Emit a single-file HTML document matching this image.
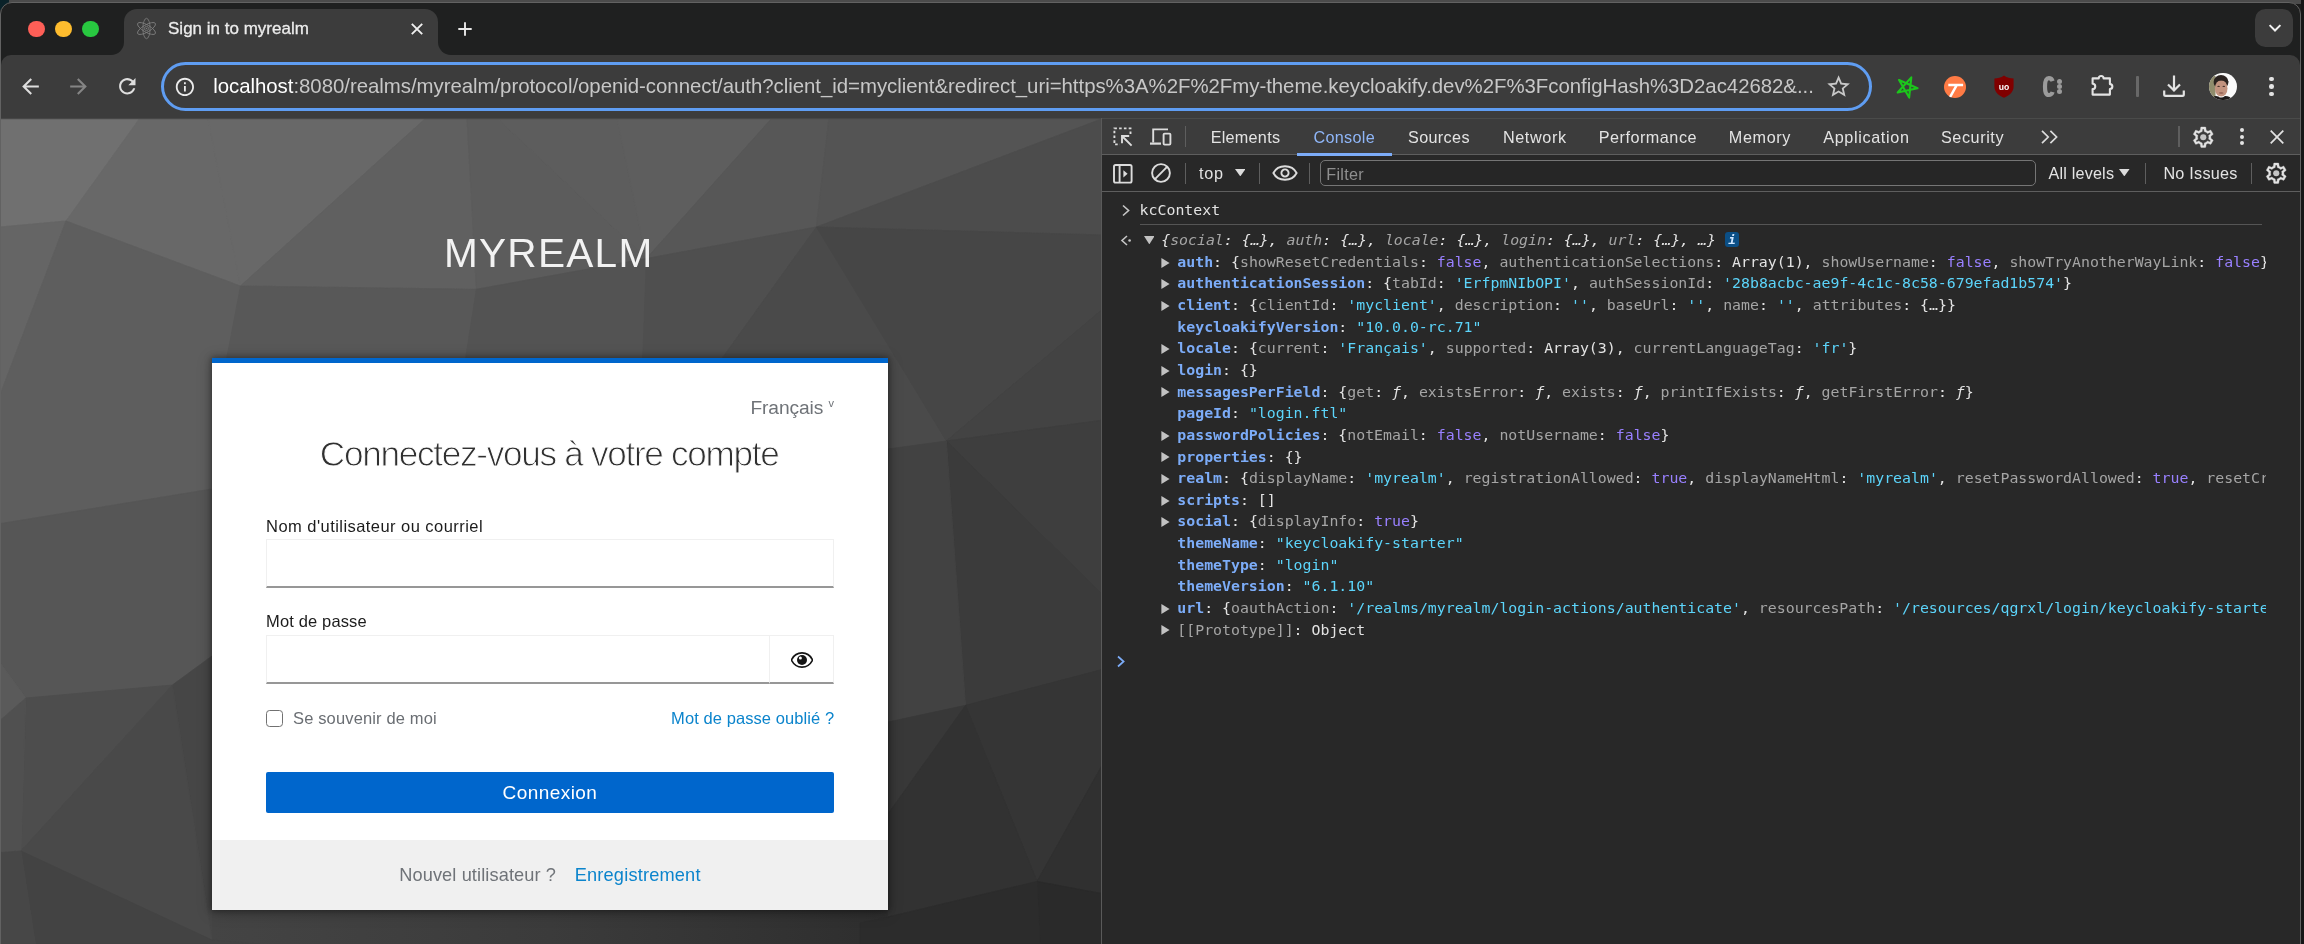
<!DOCTYPE html><html lang="fr"><head><meta charset="utf-8"><title>Sign in to myrealm</title><style>
*{box-sizing:border-box;margin:0;padding:0}
html,body{width:2304px;height:944px;overflow:hidden;background:#1b1b1b}
body{position:relative;font-family:"Liberation Sans",sans-serif}
.abs{position:absolute}
.grp{position:absolute;left:0;top:0;width:0;height:0}
input,button{font:inherit;outline:none;-webkit-appearance:none;appearance:none;border-radius:0;margin:0;padding:0}
.t{position:absolute;white-space:pre}
#desk{position:absolute;left:0;top:0;width:2304px;height:4px;background:#4b4b4b}
#deskL{position:absolute;left:0;top:0;width:9px;height:10px;background:#0a2229}
#win{position:absolute;left:0;top:2px;width:2301.4px;height:960px;background:#1f2020;border-radius:12px 12px 0 0;border:1.3px solid #626262;overflow:hidden}
#app{position:absolute;left:0;top:0;width:2304px;height:944px;will-change:transform}
#toolbar{position:absolute;left:1.3px;top:55.2px;width:2298.8px;height:63px;background:#3c3c3c;border-radius:10px 10px 0 0}
#tab{position:absolute;left:124.3px;top:9px;width:314px;height:46.5px;background:#3c3c3c;border-radius:13px 13px 0 0}
.flare{position:absolute;top:42.2px;width:13px;height:13px;background:#3c3c3c}
.flare i{position:absolute;left:0;top:0;width:13px;height:13px;background:#1f2020}
#omni{position:absolute;left:161px;top:62px;width:1711.4px;height:49px;border:3px solid #5f9df2;border-radius:24.5px;background:#3c3c3c}
#tsearch{position:absolute;left:2255px;top:9px;width:38px;height:38px;border-radius:10.5px;background:#3c3c3c}
#page{position:absolute;left:1.3px;top:118.3px;width:1099.3px;height:830px;overflow:hidden;background:#555}
#card{position:absolute;left:211.6px;top:358.2px;width:676.8px;height:551.4px;background:#fff;border-top:5.4px solid #0066cc;box-shadow:0 0 6px 1px rgba(0,0,0,.35), 0 2px 14px rgba(0,0,0,.25)}
#cardfoot{position:absolute;left:211.6px;top:839.7px;width:676.8px;height:69.9px;background:#f0f0f0}
.inp{position:absolute;background:#fff;border:1.3px solid #f0f0f0;border-bottom:2px solid #979797}
#dt{position:absolute;left:1100.6px;top:118.3px;width:1199.5px;height:830px;background:#282828;border-left:1.3px solid #5a5a5a}
#dttabs{position:absolute;left:1101.9px;top:118.3px;width:1198.2px;height:37px;background:#3c3c3c;border-bottom:1.3px solid #5e5e5e;border-top:1px solid #4a4b4a}
#dtbar{position:absolute;left:1101.9px;top:155.3px;width:1198.2px;height:36.6px;background:#282828;border-bottom:1.3px solid #5e5e5e}
.vsep{position:absolute;width:1.3px;background:#5e5e5e}
#filter{position:absolute;left:1319.8px;top:160.3px;width:715.8px;height:25.4px;border:1.3px solid #757575;border-radius:5px;background:#262626}
#rowsclip{position:absolute;left:0;top:0;width:2266.2px;height:944px;overflow:hidden}
.row{position:absolute;left:1177.3px;white-space:pre;font:400 14.87px/21.63px "DejaVu Sans Mono","Liberation Mono",monospace;color:#e3e3e3}
.k{color:#7cacf8;font-weight:700}
.d{color:#a5a5a5}
.s{color:#5cd5fb}
.b{color:#9980ff}
.f{font-style:italic}
.di{color:#a5a5a5;font-style:italic}
</style></head><body>
<div id="desk"></div><div id="deskL"></div>
<div id="win"></div>
<div id="app">
<header class="grp" id="tabstrip">
<div class="abs" style="left:28.2px;top:20.7px;width:16.6px;height:16.6px;border-radius:50%;background:#fe5f57"></div>
<div class="abs" style="left:55.2px;top:20.7px;width:16.6px;height:16.6px;border-radius:50%;background:#febc2e"></div>
<div class="abs" style="left:82.2px;top:20.7px;width:16.6px;height:16.6px;border-radius:50%;background:#28c840"></div>
<div id="tab"></div>
<div class="flare" style="left:111.3px"><i style="border-radius:0 0 13px 0"></i></div>
<div class="flare" style="left:438.3px"><i style="border-radius:0 0 0 13px"></i></div>
<svg class="abs" style="left:135.50px;top:16.60px;" width="21" height="23" viewBox="-10.5 -11.5 21 23"><g fill="none" stroke="#7d7d7d" stroke-width="0.85"><ellipse rx="3.6" ry="10.2"/><ellipse rx="3.6" ry="10.2" transform="rotate(60)"/><ellipse rx="3.6" ry="10.2" transform="rotate(-60)"/><circle r="2.1" stroke-width="0.8"/></g><circle r="0.8" fill="#7d7d7d"/></svg>
<span class="t" id="tabtitle" style="left:168.00px;top:17.51px;font:400 17.0px/22px 'Liberation Sans', sans-serif;color:#ececec;letter-spacing:0.007px;-webkit-text-stroke:0.3px #ececec;">Sign in to myrealm</span>
<svg class="abs" style="left:409.80px;top:21.60px;" width="14" height="14" viewBox="-7 -7 14 14"><path d="M-5.2 -5.2L5.2 5.2M5.2 -5.2L-5.2 5.2" stroke="#f0f0f0" stroke-width="1.9" fill="none"/></svg>
<svg class="abs" style="left:457.10px;top:20.60px;" width="16" height="16" viewBox="-8 -8 16 16"><path d="M-6.7 0H6.7M0 -6.7V6.7" stroke="#e8e8e8" stroke-width="1.9" fill="none"/></svg>
<div id="tsearch"></div>
<svg class="abs" style="left:2266.60px;top:20.00px;" width="16" height="16" viewBox="-8 -8 16 16"><path d="M-5.4 -2.9L0 2.5L5.4 -2.9" stroke="#f2f2f2" stroke-width="2" fill="none"/></svg>
</header>
<nav class="grp" id="navbar">
<div id="toolbar"></div>
<svg class="abs" style="left:17.50px;top:74.00px;" width="25" height="25" viewBox="0 0 24 24"><path d="M20 11H7.83l5.59-5.59L12 4l-8 8 8 8 1.41-1.41L7.83 13H20v-2z" fill="#dedede"/></svg>
<svg class="abs" style="left:65.70px;top:74.00px;" width="25" height="25" viewBox="0 0 24 24"><path d="M12 4l-1.41 1.41L16.17 11H4v2h12.17l-5.58 5.59L12 20l8-8z" fill="#858585"/></svg>
<svg class="abs" style="left:115.10px;top:74.40px;" width="24.6" height="24.6" viewBox="0 0 24 24"><path d="M17.65 6.35C16.2 4.9 14.21 4 12 4c-4.42 0-7.99 3.58-7.99 8s3.57 8 7.99 8c3.73 0 6.84-2.55 7.73-6h-2.08c-.82 2.33-3.04 4-5.65 4-3.31 0-6-2.69-6-6s2.69-6 6-6c1.66 0 3.14.69 4.22 1.78L13 11h7V4l-2.35 2.35z" fill="#dedede"/></svg>
<div id="omni"></div>
<svg class="abs" style="left:174.40px;top:75.60px;" width="21.8" height="21.8" viewBox="0 0 24 24"><path d="M11 7h2v2h-2zm0 4h2v6h-2zm1-9C6.48 2 2 6.48 2 12s4.48 10 10 10 10-4.48 10-10S17.52 2 12 2zm0 18c-4.41 0-8-3.59-8-8s3.59-8 8-8 8 3.59 8 8-3.59 8-8 8z" fill="#ececec"/></svg>
<span class="t" id="url" style="left:213.20px;top:73.33px;font:400 20.4px/27px 'Liberation Sans', sans-serif;color:#c7c7c7;letter-spacing:-0.031px;"><span style="color:#fff">localhost</span>:8080/realms/myrealm/protocol/openid-connect/auth?client_id=myclient&amp;redirect_uri=https%3A%2F%2Fmy-theme.keycloakify.dev%2F%3FconfigHash%3D2ac42682&amp;...</span>
<svg class="abs" style="left:1825.00px;top:73.00px;" width="27.2" height="27.2" viewBox="0 0 24 24"><path d="M22 9.24l-7.19-.62L12 2 9.19 8.63 2 9.24l5.46 4.73L5.82 21 12 17.27 18.18 21l-1.63-7.03L22 9.24zM12 15.4l-3.76 2.27 1-4.28-3.32-2.88 4.38-.38L12 6.1l1.71 4.04 4.38.38-3.32 2.88 1 4.28L12 15.4z" fill="#c8c8c8"/></svg>
<svg class="abs" style="left:1894.70px;top:74.80px;" width="24" height="24" viewBox="-12 -12 24 24"><g transform="rotate(24) scale(1.1)"><path d="M0 -9.6L5.7 8L-9.2 -2.9H9.2L-5.7 8Z" fill="none" stroke="#1cc61c" stroke-width="1.9" stroke-linejoin="round"/></g></svg>
<div class="abs" style="left:1943.9px;top:75.5px;width:22.2px;height:22.2px;border-radius:50%;background:#ff7b45;overflow:hidden"><svg class="abs" style="left:0;top:0" width="22.2" height="22.2" viewBox="-11.1 -11.1 22.2 22.2"><path d="M-6.8 -2.2H8M1.6 -2L-5.6 11" stroke="#fff" stroke-width="2.5" fill="none"/></svg></div>
<svg class="abs" style="left:1993.70px;top:74.90px;" width="20" height="23" viewBox="-10 -11.5 20 23"><path d="M0 -11C-3 -8.8 -6.5 -8 -9.6 -8V0C-9.6 6 -4.5 9.5 0 11.3C4.5 9.5 9.6 6 9.6 0V-8C6.5 -8 3 -8.8 0 -11Z" fill="#800000"/><text x="0" y="3" text-anchor="middle" font-family="Liberation Sans, sans-serif" font-weight="700" font-size="8.6" fill="#fff">uo</text></svg>
<svg class="abs" style="left:2040.00px;top:74.00px;" width="26" height="26" viewBox="0 0 26 26"><path d="M12.6 7.2C11.8 4.6 9.9 4.2 8.8 4.2C5.6 4.2 5 7.4 5 12.6C5 17.8 5.6 21 8.8 21C9.9 21 11.8 20.6 12.6 18" fill="none" stroke="#9b9b9b" stroke-width="4.2"/><circle cx="19.5" cy="7.6" r="2.5" fill="#9b9b9b"/><circle cx="19.5" cy="12.5" r="2.5" fill="#9b9b9b"/><circle cx="19.5" cy="17.5" r="2.5" fill="#9b9b9b"/></svg>
<svg class="abs" style="left:2089.50px;top:73.00px;" width="26" height="26" viewBox="-13 -13 26 26"><path d="M-10.4 -7.6H-4.3A2.45 2.45 0 0 1 0.6 -7.6H6.9V-1.9A2.45 2.45 0 0 1 6.9 3V8.6H-10.4V3.1A2.65 2.65 0 0 0 -10.4 -2.2Z" fill="none" stroke="#e3e3e3" stroke-width="2.1" stroke-linejoin="round"/></svg>
<div class="abs" style="left:2136.2px;top:75.6px;width:2.4px;height:21.6px;background:#686868;border-radius:1px"></div>
<svg class="abs" style="left:2161.00px;top:73.00px;" width="26" height="26" viewBox="-13 -13 26 26"><path d="M0 -10.4V4.5M-6 -1.6L0 4.5L6 -1.6" fill="none" stroke="#e3e3e3" stroke-width="2.2"/><path d="M-9.8 4.6V8.4Q-9.8 9.8 -8.4 9.8H8.4Q9.8 9.8 9.8 8.4V4.6" fill="none" stroke="#e3e3e3" stroke-width="2.2"/></svg>
<div class="abs" style="left:2209.3px;top:72.5px;width:27.4px;height:27.4px;border-radius:50%;background:#fafafa;overflow:hidden"><svg class="abs" style="left:0;top:0" width="27.4" height="27.4" viewBox="0 0 27.4 27.4"><rect x="0" y="3" width="6.5" height="22" fill="#8f8c6c"/><ellipse cx="12" cy="9" rx="7.4" ry="7" fill="#2b2320"/><ellipse cx="12.2" cy="15.4" rx="6.3" ry="8.2" fill="#c2937f"/><path d="M4.8 11Q6 5.5 12 5.2Q18 5.4 19.4 11L18.4 7.2L12 3.6L5.6 6.4Z" fill="#2b2320"/><path d="M5.6 12Q7 6.6 12.4 7.6Q17.4 6.8 18.8 12L19.4 8L12 4L5 7.4Z" fill="#2b2320"/><path d="M2 27.4Q4 21.5 9.4 23.4Q12.4 26 16 23Q22 23 23 27.4Z" fill="#1d1a1a"/><ellipse cx="12.2" cy="20" rx="2.4" ry="0.8" fill="#8d5c50"/><ellipse cx="9.6" cy="13.4" rx="1.3" ry="0.6" fill="#4a352e"/><ellipse cx="14.8" cy="13.4" rx="1.3" ry="0.6" fill="#4a352e"/></svg></div>
<div class="abs" style="left:2269.2px;top:76.7px;width:4.6px;height:4.6px;border-radius:50%;background:#e3e3e3"></div>
<div class="abs" style="left:2269.2px;top:84.2px;width:4.6px;height:4.6px;border-radius:50%;background:#e3e3e3"></div>
<div class="abs" style="left:2269.2px;top:91.7px;width:4.6px;height:4.6px;border-radius:50%;background:#e3e3e3"></div>
</nav>
<main class="grp" id="kc">
<div id="page"><svg class="abs" style="left:-1.3px;top:-118.3px" width="1104" height="948" viewBox="0 0 1104 948"><defs><linearGradient id="bgg" x1="0" y1="118" x2="1100" y2="944" gradientUnits="userSpaceOnUse"><stop offset="0" stop-color="#727272"/><stop offset="0.45" stop-color="#585858"/><stop offset="1" stop-color="#303030"/></linearGradient><linearGradient id="bot" x1="212" y1="0" x2="888" y2="0" gradientUnits="userSpaceOnUse"><stop offset="0" stop-color="#444"/><stop offset="0.5" stop-color="#3b3b3b"/><stop offset="1" stop-color="#2e2e2e"/></linearGradient></defs><rect x="0" y="118" width="1104" height="830" fill="url(#bgg)"/><rect x="200" y="900" width="700" height="48" fill="url(#bot)"/><polygon points="0,118 140,118 66,221 0,227" fill="#707070" stroke="#707070" stroke-width="0.8"/><polygon points="140,118 208,118 240.5,286 66,221" fill="#686868" stroke="#686868" stroke-width="0.8"/><polygon points="208,118 426,118 240.5,286" fill="#686868" stroke="#686868" stroke-width="0.8"/><polygon points="426,118 467,118 476.4,289.3 240.5,286" fill="#606060" stroke="#606060" stroke-width="0.8"/><polygon points="467,118 497,118 646.4,258.5 476.4,289.3" fill="#5c5c5c" stroke="#5c5c5c" stroke-width="0.8"/><polygon points="497,118 617,118 646.4,258.5" fill="#5d5d5d" stroke="#5d5d5d" stroke-width="0.8"/><polygon points="617,118 772,118 646.4,258.5" fill="#5e5e5e" stroke="#5e5e5e" stroke-width="0.8"/><polygon points="772,118 829,118 816.4,227 646.4,258.5" fill="#575757" stroke="#575757" stroke-width="0.8"/><polygon points="829,118 1104,118 816.4,227" fill="#545454" stroke="#545454" stroke-width="0.8"/><polygon points="1104,118 1104,235 816.4,227" fill="#4c4c4c" stroke="#4c4c4c" stroke-width="0.8"/><polygon points="0,227 66,221 0,395" fill="#656565" stroke="#656565" stroke-width="0.8"/><polygon points="66,221 240.5,286 226,362 212,489 0,523.7 0,395" fill="#5e5e5e" stroke="#5e5e5e" stroke-width="0.8"/><polygon points="240.5,286 476.4,289.3 465,362 226,362" fill="#585858" stroke="#585858" stroke-width="0.8"/><polygon points="476.4,289.3 646.4,258.5 642.6,362 465,362" fill="#535353" stroke="#535353" stroke-width="0.8"/><polygon points="646.4,258.5 816.4,227 719.5,362 642.6,362" fill="#4f4f4f" stroke="#4f4f4f" stroke-width="0.8"/><polygon points="816.4,227 946.4,441 888,449 888,362 719.5,362" fill="#4a4a4a" stroke="#4a4a4a" stroke-width="0.8"/><polygon points="816.4,227 1104,235 1104,308 946.4,441" fill="#464646" stroke="#464646" stroke-width="0.8"/><polygon points="946.4,441 1104,308 1104,420" fill="#434343" stroke="#434343" stroke-width="0.8"/><polygon points="946.4,441 1104,420 1104,596" fill="#3e3e3e" stroke="#3e3e3e" stroke-width="0.8"/><polygon points="946.4,441 1104,596 1104,669 965.6,705.3" fill="#3b3b3b" stroke="#3b3b3b" stroke-width="0.8"/><polygon points="888,449 946.4,441 965.6,705.3 888,722" fill="#424242" stroke="#424242" stroke-width="0.8"/><polygon points="888,722 965.6,705.3 888,814" fill="#383838" stroke="#383838" stroke-width="0.8"/><polygon points="965.6,705.3 1104,669 1104,762 1037,881.4" fill="#353535" stroke="#353535" stroke-width="0.8"/><polygon points="888,814 965.6,705.3 1037,881.4 888,917" fill="#323232" stroke="#323232" stroke-width="0.8"/><polygon points="1037,881.4 1104,762 1104,894" fill="#303030" stroke="#303030" stroke-width="0.8"/><polygon points="1037,881.4 1104,894 1104,944 1040,944" fill="#2a2a2a" stroke="#2a2a2a" stroke-width="0.8"/><polygon points="888,917 1037,881.4 1040,944 860,944 860,923" fill="#2c2c2c" stroke="#2c2c2c" stroke-width="0.8"/><polygon points="0,523.7 212,489 212,656 172.4,685 25.8,698 0,662.5" fill="#565656" stroke="#565656" stroke-width="0.8"/><polygon points="0,662.5 25.8,698 0,720.5" fill="#5a5a5a" stroke="#5a5a5a" stroke-width="0.8"/><polygon points="25.8,698 172.4,685 21,851" fill="#4d4d4d" stroke="#4d4d4d" stroke-width="0.8"/><polygon points="0,720.5 25.8,698 21,851 0,852.6" fill="#505050" stroke="#505050" stroke-width="0.8"/><polygon points="172.4,685 212,656 212,940" fill="#464646" stroke="#464646" stroke-width="0.8"/><polygon points="172.4,685 212,940 21,851" fill="#494949" stroke="#494949" stroke-width="0.8"/><polygon points="21,851 212,940 260,944 35.4,944" fill="#434343" stroke="#434343" stroke-width="0.8"/><polygon points="0,852.6 21,851 35.4,944 0,944" fill="#474747" stroke="#474747" stroke-width="0.8"/><rect x="0" y="118" width="1104" height="1.2" fill="#474747"/></svg></div>
<div class="t" id="realm" style="left:444.00px;top:227.43px;font:400 40.6px/53px 'Liberation Sans', sans-serif;color:#f2f2f2;letter-spacing:1.252px;">MYREALM</div>
<div id="card"></div><div id="cardfoot"></div>
<form class="grp" id="kc-form-login">
<span class="t" id="lang" style="left:750.40px;top:394.65px;font:400 19.2px/25px 'Liberation Sans', sans-serif;color:#6f7378;letter-spacing:-0.083px;">Français</span>
<span class="t" style="left:828.6px;top:396.2px;font:400 11px/14px 'Liberation Sans',sans-serif;color:#6f7378">v</span>
<h1 class="t" id="title" style="left:319.80px;top:430.50px;font:400 35.2px/46px 'Liberation Sans', sans-serif;color:#303030;letter-spacing:-1.310px;-webkit-text-stroke:0.95px #fff;">Connectez-vous à votre compte</h1>
<label class="t" id="lab1" for="username" style="left:266.10px;top:515.58px;font:400 16.5px/21px 'Liberation Sans', sans-serif;color:#1c1c1c;letter-spacing:0.447px;">Nom d&#x27;utilisateur ou courriel</label>
<input class="inp" id="username" name="username" type="text" autocomplete="off" style="left:266.1px;top:539px;width:567.9px;height:48.6px">
<label class="t" id="lab2" for="password" style="left:266.10px;top:611.38px;font:400 16.5px/21px 'Liberation Sans', sans-serif;color:#1c1c1c;letter-spacing:0.139px;">Mot de passe</label>
<input class="inp" id="password" name="password" type="password" autocomplete="off" style="left:266.1px;top:635.3px;width:504.2px;height:48.6px">
<button class="inp" type="button" aria-label="Afficher le mot de passe" style="left:769px;top:635.3px;width:65px;height:48.6px"></button>
<svg class="abs" style="left:790.60px;top:652.20px;" width="22" height="16" viewBox="-11 -8 22 16"><path d="M-10.6 0C-6 -9.4 6 -9.4 10.6 0C6 9.4 -6 9.4 -10.6 0Z" fill="none" stroke="#151515" stroke-width="1.7"/><circle r="5" fill="#151515"/><circle cx="-1.6" cy="-2" r="1.5" fill="#fff"/></svg>
<input class="abs" id="rememberMe" name="rememberMe" type="checkbox" style="left:266.1px;top:709.5px;width:17.3px;height:17.3px;border:1.7px solid #717171;border-radius:3.6px;background:#fff">
<label class="t" id="remember" for="rememberMe" style="left:293.00px;top:707.68px;font:400 16.5px/21px 'Liberation Sans', sans-serif;color:#6a6e73;letter-spacing:0.144px;">Se souvenir de moi</label>
<a class="t" id="forgot" href="#" style="left:671.10px;top:707.68px;font:400 16.5px/21px 'Liberation Sans', sans-serif;color:#0b84cc;letter-spacing:0.078px;text-decoration:none;">Mot de passe oublié ?</a>
<button class="abs" id="kc-login" type="submit" style="left:266.1px;top:771.5px;width:567.9px;height:41.4px;background:#0066cc;border:0;border-radius:2px"><span class="t" id="btn" style="left:236.50px;top:8.82px;font:400 19.0px/25px 'Liberation Sans', sans-serif;color:#ffffff;letter-spacing:0.432px;">Connexion</span></button>
</form>
<span class="t" id="newuser" style="left:399.20px;top:863.09px;font:400 18.2px/24px 'Liberation Sans', sans-serif;color:#6f7378;letter-spacing:0.111px;">Nouvel utilisateur ?</span>
<a class="t" id="register" href="#" style="left:574.70px;top:863.09px;font:400 18.2px/24px 'Liberation Sans', sans-serif;color:#0b84cc;letter-spacing:0.189px;text-decoration:none;">Enregistrement</a>
</main>
<aside class="grp" id="devtools">
<div id="dt"></div><div id="dttabs"></div><div id="dtbar"></div>
<svg class="abs" style="left:1112.00px;top:126.00px;" width="24" height="22" viewBox="0 0 24 22"><path d="M18.5 8V2.4H2.4V18.4H8" fill="none" stroke="#dcdcdc" stroke-width="1.9" stroke-dasharray="2.6 2.2"/><path d="M10 10L19.6 19.6M10 17.2V10H17.2" fill="none" stroke="#dcdcdc" stroke-width="1.9"/></svg>
<svg class="abs" style="left:1149.00px;top:127.00px;" width="24" height="20" viewBox="0 0 24 20"><path d="M4.2 15.5V2.4H19" fill="none" stroke="#dcdcdc" stroke-width="1.9"/><path d="M1 16.6H12" stroke="#dcdcdc" stroke-width="2.2"/><rect x="14.6" y="6.6" width="6.8" height="11" rx="1" fill="none" stroke="#dcdcdc" stroke-width="1.9"/></svg>
<div class="vsep" style="left:1184.9px;top:126px;height:21.3px"></div>
<span class="t" id="dt0" style="left:1210.70px;top:126.89px;font:400 16.2px/21px 'Liberation Sans', sans-serif;color:#e3e3e3;letter-spacing:0.259px;">Elements</span>
<span class="t" id="dt1" style="left:1313.50px;top:126.89px;font:400 16.2px/21px 'Liberation Sans', sans-serif;color:#8fb6f8;letter-spacing:0.301px;">Console</span>
<span class="t" id="dt2" style="left:1408.00px;top:126.89px;font:400 16.2px/21px 'Liberation Sans', sans-serif;color:#e3e3e3;letter-spacing:0.350px;">Sources</span>
<span class="t" id="dt3" style="left:1502.90px;top:126.89px;font:400 16.2px/21px 'Liberation Sans', sans-serif;color:#e3e3e3;letter-spacing:0.621px;">Network</span>
<span class="t" id="dt4" style="left:1598.70px;top:126.89px;font:400 16.2px/21px 'Liberation Sans', sans-serif;color:#e3e3e3;letter-spacing:0.513px;">Performance</span>
<span class="t" id="dt5" style="left:1728.80px;top:126.89px;font:400 16.2px/21px 'Liberation Sans', sans-serif;color:#e3e3e3;letter-spacing:0.628px;">Memory</span>
<span class="t" id="dt6" style="left:1823.20px;top:126.89px;font:400 16.2px/21px 'Liberation Sans', sans-serif;color:#e3e3e3;letter-spacing:0.650px;">Application</span>
<span class="t" id="dt7" style="left:1941.00px;top:126.89px;font:400 16.2px/21px 'Liberation Sans', sans-serif;color:#e3e3e3;letter-spacing:0.573px;">Security</span>
<div class="abs" style="left:1297.3px;top:153.4px;width:94.7px;height:2.3px;background:#7cacf8"></div>
<svg class="abs" style="left:2039.60px;top:128.60px;" width="20" height="16" viewBox="-10 -8 20 16"><path d="M-8 -6.2L-1.8 0L-8 6.2M0.4 -6.2L6.6 0L0.4 6.2" fill="none" stroke="#dcdcdc" stroke-width="1.7"/></svg>
<div class="vsep" style="left:2178.4px;top:126px;height:21.3px"></div>
<svg class="abs" style="left:2191.05px;top:124.55px;" width="24.5" height="24.5" viewBox="0 0 24 24"><path d="M19.43 12.98c.04-.32.07-.64.07-.98 0-.34-.03-.66-.07-.98l2.11-1.65c.19-.15.24-.42.12-.64l-2-3.46c-.09-.16-.26-.25-.44-.25-.06 0-.12.01-.17.03l-2.49 1c-.52-.4-1.08-.73-1.69-.98l-.38-2.65C14.46 2.18 14.25 2 14 2h-4c-.25 0-.46.18-.49.42l-.38 2.65c-.61.25-1.17.59-1.69.98l-2.49-1c-.06-.02-.12-.03-.18-.03-.17 0-.34.09-.43.25l-2 3.46c-.13.22-.07.49.12.64l2.11 1.65c-.04.32-.07.65-.07.98 0 .33.03.66.07.98l-2.11 1.65c-.19.15-.24.42-.12.64l2 3.46c.09.16.26.25.44.25.06 0 .12-.01.17-.03l2.49-1c.52.4 1.08.73 1.69.98l.38 2.65c.03.24.24.42.49.42h4c.25 0 .46-.18.49-.42l.38-2.65c.61-.25 1.17-.59 1.69-.98l2.49 1c.06.02.12.03.18.03.17 0 .34-.09.43-.25l2-3.46c.12-.22.07-.49-.12-.64l-2.11-1.65zm-1.98-1.71c.04.31.05.52.05.73 0 .21-.02.43-.05.73l-.14 1.13.89.7 1.08.84-.7 1.21-1.27-.51-1.04-.42-.9.68c-.43.32-.84.56-1.25.73l-1.06.43-.16 1.13-.2 1.35h-1.4l-.19-1.35-.16-1.13-1.06-.43c-.43-.18-.83-.41-1.23-.71l-.91-.7-1.06.43-1.27.51-.7-1.21 1.08-.84.89-.7-.14-1.13c-.03-.31-.05-.54-.05-.74s.02-.43.05-.73l.14-1.13-.89-.7-1.08-.84.7-1.21 1.27.51 1.04.42.9-.68c.43-.32.84-.56 1.25-.73l1.06-.43.16-1.13.2-1.35h1.39l.19 1.35.16 1.13 1.06.43c.43.18.83.41 1.23.71l.91.7 1.06-.43 1.27-.51.7 1.21-1.07.85-.89.7.14 1.13z" fill="#e3e3e3" stroke="#e3e3e3" stroke-width="0.35"/><circle cx="12" cy="12" r="3" fill="#c4c4c4"/></svg>
<div class="abs" style="left:2239.8px;top:128.20000000000002px;width:4px;height:4px;border-radius:50%;background:#e3e3e3"></div>
<div class="abs" style="left:2239.8px;top:134.8px;width:4px;height:4px;border-radius:50%;background:#e3e3e3"></div>
<div class="abs" style="left:2239.8px;top:141.4px;width:4px;height:4px;border-radius:50%;background:#e3e3e3"></div>
<svg class="abs" style="left:2268.70px;top:128.80px;" width="16" height="16" viewBox="-8 -8 16 16"><path d="M-6.3 -6.3L6.3 6.3M6.3 -6.3L-6.3 6.3" stroke="#e3e3e3" stroke-width="1.7" fill="none"/></svg>
<svg class="abs" style="left:1112.00px;top:162.50px;" width="22" height="22" viewBox="0 0 22 22"><rect x="2" y="2" width="17.6" height="17.6" rx="1.6" fill="none" stroke="#dcdcdc" stroke-width="1.9"/><path d="M7.6 2V20" stroke="#dcdcdc" stroke-width="1.9"/><path d="M11.4 7.2L15.6 10.8L11.4 14.4Z" fill="#dcdcdc"/></svg>
<svg class="abs" style="left:1149.80px;top:162.10px;" width="22" height="22" viewBox="-11 -11 22 22"><circle r="8.9" fill="none" stroke="#dcdcdc" stroke-width="1.9"/><path d="M-6.3 6.3L6.3 -6.3" stroke="#dcdcdc" stroke-width="1.9"/></svg>
<div class="vsep" style="left:1184.9px;top:162.5px;height:21.3px"></div>
<span class="t" id="ctop" style="left:1199.00px;top:163.49px;font:400 16.2px/21px 'Liberation Sans', sans-serif;color:#e3e3e3;letter-spacing:0.746px;">top</span>
<svg class="abs" style="left:1234.80px;top:169.00px;" width="10.6" height="7.4" viewBox="0 0 10.6 7.4"><path d="M0 0H10.6L5.3 7.4Z" fill="#dcdcdc"/></svg>
<div class="vsep" style="left:1259.2px;top:162.5px;height:21.3px"></div>
<svg class="abs" style="left:1271.50px;top:164.00px;" width="26" height="18" viewBox="-13 -9 26 18"><path d="M-11.6 0C-7 -9 7 -9 11.6 0C7 9 -7 9 -11.6 0Z" fill="none" stroke="#dcdcdc" stroke-width="1.9"/><circle r="3.6" fill="none" stroke="#dcdcdc" stroke-width="1.9"/></svg>
<div class="vsep" style="left:1308.8px;top:162.5px;height:21.3px"></div>
<div id="filter"></div>
<span class="t" id="cfilter" style="left:1326.30px;top:164.49px;font:400 16.2px/21px 'Liberation Sans', sans-serif;color:#8f8f8f;letter-spacing:0.285px;">Filter</span>
<span class="t" id="clevels" style="left:2048.60px;top:163.29px;font:400 16.2px/21px 'Liberation Sans', sans-serif;color:#e3e3e3;letter-spacing:0.168px;">All levels</span>
<svg class="abs" style="left:2119.40px;top:168.80px;" width="10.6" height="7.4" viewBox="0 0 10.6 7.4"><path d="M0 0H10.6L5.3 7.4Z" fill="#dcdcdc"/></svg>
<div class="vsep" style="left:2145px;top:162.5px;height:21.3px"></div>
<span class="t" id="cissues" style="left:2163.40px;top:163.29px;font:400 16.2px/21px 'Liberation Sans', sans-serif;color:#e3e3e3;letter-spacing:0.252px;">No Issues</span>
<div class="vsep" style="left:2251.2px;top:162.5px;height:21.3px"></div>
<svg class="abs" style="left:2264.45px;top:160.75px;" width="24.5" height="24.5" viewBox="0 0 24 24"><path d="M19.43 12.98c.04-.32.07-.64.07-.98 0-.34-.03-.66-.07-.98l2.11-1.65c.19-.15.24-.42.12-.64l-2-3.46c-.09-.16-.26-.25-.44-.25-.06 0-.12.01-.17.03l-2.49 1c-.52-.4-1.08-.73-1.69-.98l-.38-2.65C14.46 2.18 14.25 2 14 2h-4c-.25 0-.46.18-.49.42l-.38 2.65c-.61.25-1.17.59-1.69.98l-2.49-1c-.06-.02-.12-.03-.18-.03-.17 0-.34.09-.43.25l-2 3.46c-.13.22-.07.49.12.64l2.11 1.65c-.04.32-.07.65-.07.98 0 .33.03.66.07.98l-2.11 1.65c-.19.15-.24.42-.12.64l2 3.46c.09.16.26.25.44.25.06 0 .12-.01.17-.03l2.49-1c.52.4 1.08.73 1.69.98l.38 2.65c.03.24.24.42.49.42h4c.25 0 .46-.18.49-.42l.38-2.65c.61-.25 1.17-.59 1.69-.98l2.49 1c.06.02.12.03.18.03.17 0 .34-.09.43-.25l2-3.46c.12-.22.07-.49-.12-.64l-2.11-1.65zm-1.98-1.71c.04.31.05.52.05.73 0 .21-.02.43-.05.73l-.14 1.13.89.7 1.08.84-.7 1.21-1.27-.51-1.04-.42-.9.68c-.43.32-.84.56-1.25.73l-1.06.43-.16 1.13-.2 1.35h-1.4l-.19-1.35-.16-1.13-1.06-.43c-.43-.18-.83-.41-1.23-.71l-.91-.7-1.06.43-1.27.51-.7-1.21 1.08-.84.89-.7-.14-1.13c-.03-.31-.05-.54-.05-.74s.02-.43.05-.73l.14-1.13-.89-.7-1.08-.84.7-1.21 1.27.51 1.04.42.9-.68c.43-.32.84-.56 1.25-.73l1.06-.43.16-1.13.2-1.35h1.39l.19 1.35.16 1.13 1.06.43c.43.18.83.41 1.23.71l.91.7 1.06-.43 1.27-.51.7 1.21-1.07.85-.89.7.14 1.13z" fill="#e3e3e3" stroke="#e3e3e3" stroke-width="0.35"/><circle cx="12" cy="12" r="3" fill="#c4c4c4"/></svg>
<svg class="abs" style="left:1121.00px;top:204.00px;" width="10" height="13" viewBox="0 0 10 13"><path d="M2 1.5L7.6 6.5L2 11.5" fill="none" stroke="#c8c8c8" stroke-width="1.6"/></svg>
<div class="row" style="left:1139.6px;top:199.84px">kcContext</div>
<div class="abs" style="left:1139.6px;top:223.8px;width:1122px;height:1.3px;background:#555"></div>
<svg class="abs" style="left:1119.00px;top:233.50px;" width="14" height="13" viewBox="0 0 14 13"><path d="M8 2L3 6.5L8 11" fill="none" stroke="#c6c6c6" stroke-width="1.6"/><circle cx="10.6" cy="6.5" r="1.3" fill="#c6c6c6"/></svg>
<svg class="abs" style="left:1143.70px;top:236.00px;" width="10.6" height="8.4" viewBox="0 0 10.6 8.4"><path d="M0 0H10.6L5.3 8.4Z" fill="#c2c2c2"/></svg>
<div id="rowsclip">
<div class="row" style="left:1161.2px;top:230.24px;font-style:italic">{<span class="di">social</span>: {…}, <span class="di">auth</span>: {…}, <span class="di">locale</span>: {…}, <span class="di">login</span>: {…}, <span class="di">url</span>: {…}, …}</div>
<div class="abs" style="left:1724.6px;top:232px;width:14.4px;height:15.4px;border-radius:3px;background:#0b4f86"></div>
<span class="t" style="left:1728.2px;top:231.6px;font:italic 700 12.5px/16px 'DejaVu Sans Mono',monospace;color:#cfe6ff">i</span>
<svg class="abs" style="left:1160.5px;top:257.60px" width="9" height="10" viewBox="0 0 9 10"><path d="M0.4 0L8.6 5L0.4 10z" fill="#c2c2c2"/></svg>
<div class="row" style="top:251.84px"><span class="k">auth</span>: {<span class="d">showResetCredentials</span>: <span class="b">false</span>, <span class="d">authenticationSelections</span>: Array(1), <span class="d">showUsername</span>: <span class="b">false</span>, <span class="d">showTryAnotherWayLink</span>: <span class="b">false</span>}</div>
<svg class="abs" style="left:1160.5px;top:279.23px" width="9" height="10" viewBox="0 0 9 10"><path d="M0.4 0L8.6 5L0.4 10z" fill="#c2c2c2"/></svg>
<div class="row" style="top:273.47px"><span class="k">authenticationSession</span>: {<span class="d">tabId</span>: <span class="s">&#x27;ErfpmNIbOPI&#x27;</span>, <span class="d">authSessionId</span>: <span class="s">&#x27;28b8acbc-ae9f-4c1c-8c58-679efad1b574&#x27;</span>}</div>
<svg class="abs" style="left:1160.5px;top:300.86px" width="9" height="10" viewBox="0 0 9 10"><path d="M0.4 0L8.6 5L0.4 10z" fill="#c2c2c2"/></svg>
<div class="row" style="top:295.10px"><span class="k">client</span>: {<span class="d">clientId</span>: <span class="s">&#x27;myclient&#x27;</span>, <span class="d">description</span>: <span class="s">&#x27;&#x27;</span>, <span class="d">baseUrl</span>: <span class="s">&#x27;&#x27;</span>, <span class="d">name</span>: <span class="s">&#x27;&#x27;</span>, <span class="d">attributes</span>: {…}}</div>
<div class="row" style="top:316.73px"><span class="k">keycloakifyVersion</span>: <span class="s">&quot;10.0.0-rc.71&quot;</span></div>
<svg class="abs" style="left:1160.5px;top:344.12px" width="9" height="10" viewBox="0 0 9 10"><path d="M0.4 0L8.6 5L0.4 10z" fill="#c2c2c2"/></svg>
<div class="row" style="top:338.36px"><span class="k">locale</span>: {<span class="d">current</span>: <span class="s">&#x27;Français&#x27;</span>, <span class="d">supported</span>: Array(3), <span class="d">currentLanguageTag</span>: <span class="s">&#x27;fr&#x27;</span>}</div>
<svg class="abs" style="left:1160.5px;top:365.75px" width="9" height="10" viewBox="0 0 9 10"><path d="M0.4 0L8.6 5L0.4 10z" fill="#c2c2c2"/></svg>
<div class="row" style="top:359.99px"><span class="k">login</span>: {}</div>
<svg class="abs" style="left:1160.5px;top:387.38px" width="9" height="10" viewBox="0 0 9 10"><path d="M0.4 0L8.6 5L0.4 10z" fill="#c2c2c2"/></svg>
<div class="row" style="top:381.62px"><span class="k">messagesPerField</span>: {<span class="d">get</span>: <span class="f">ƒ</span>, <span class="d">existsError</span>: <span class="f">ƒ</span>, <span class="d">exists</span>: <span class="f">ƒ</span>, <span class="d">printIfExists</span>: <span class="f">ƒ</span>, <span class="d">getFirstError</span>: <span class="f">ƒ</span>}</div>
<div class="row" style="top:403.25px"><span class="k">pageId</span>: <span class="s">&quot;login.ftl&quot;</span></div>
<svg class="abs" style="left:1160.5px;top:430.64px" width="9" height="10" viewBox="0 0 9 10"><path d="M0.4 0L8.6 5L0.4 10z" fill="#c2c2c2"/></svg>
<div class="row" style="top:424.88px"><span class="k">passwordPolicies</span>: {<span class="d">notEmail</span>: <span class="b">false</span>, <span class="d">notUsername</span>: <span class="b">false</span>}</div>
<svg class="abs" style="left:1160.5px;top:452.27px" width="9" height="10" viewBox="0 0 9 10"><path d="M0.4 0L8.6 5L0.4 10z" fill="#c2c2c2"/></svg>
<div class="row" style="top:446.51px"><span class="k">properties</span>: {}</div>
<svg class="abs" style="left:1160.5px;top:473.90px" width="9" height="10" viewBox="0 0 9 10"><path d="M0.4 0L8.6 5L0.4 10z" fill="#c2c2c2"/></svg>
<div class="row" style="top:468.14px"><span class="k">realm</span>: {<span class="d">displayName</span>: <span class="s">&#x27;myrealm&#x27;</span>, <span class="d">registrationAllowed</span>: <span class="b">true</span>, <span class="d">displayNameHtml</span>: <span class="s">&#x27;myrealm&#x27;</span>, <span class="d">resetPasswordAllowed</span>: <span class="b">true</span>, <span class="d">resetCredentialsAllowed</span>: <span class="b">true</span></div>
<svg class="abs" style="left:1160.5px;top:495.53px" width="9" height="10" viewBox="0 0 9 10"><path d="M0.4 0L8.6 5L0.4 10z" fill="#c2c2c2"/></svg>
<div class="row" style="top:489.77px"><span class="k">scripts</span>: []</div>
<svg class="abs" style="left:1160.5px;top:517.16px" width="9" height="10" viewBox="0 0 9 10"><path d="M0.4 0L8.6 5L0.4 10z" fill="#c2c2c2"/></svg>
<div class="row" style="top:511.40px"><span class="k">social</span>: {<span class="d">displayInfo</span>: <span class="b">true</span>}</div>
<div class="row" style="top:533.03px"><span class="k">themeName</span>: <span class="s">&quot;keycloakify-starter&quot;</span></div>
<div class="row" style="top:554.66px"><span class="k">themeType</span>: <span class="s">&quot;login&quot;</span></div>
<div class="row" style="top:576.29px"><span class="k">themeVersion</span>: <span class="s">&quot;6.1.10&quot;</span></div>
<svg class="abs" style="left:1160.5px;top:603.68px" width="9" height="10" viewBox="0 0 9 10"><path d="M0.4 0L8.6 5L0.4 10z" fill="#c2c2c2"/></svg>
<div class="row" style="top:597.92px"><span class="k">url</span>: {<span class="d">oauthAction</span>: <span class="s">&#x27;/realms/myrealm/login-actions/authenticate&#x27;</span>, <span class="d">resourcesPath</span>: <span class="s">&#x27;/resources/qgrxl/login/keycloakify-starter/dist&#x27;</span>, <span class="d">loginAction</span>: <span class="s">&#x27;…&#x27;</span></div>
<svg class="abs" style="left:1160.5px;top:625.31px" width="9" height="10" viewBox="0 0 9 10"><path d="M0.4 0L8.6 5L0.4 10z" fill="#c2c2c2"/></svg>
<div class="row" style="top:619.55px"><span class="d">[[Prototype]]</span>: Object</div>
</div>
<svg class="abs" style="left:1116.00px;top:654.50px;" width="10" height="13" viewBox="0 0 10 13"><path d="M2 1.5L7.6 6.5L2 11.5" fill="none" stroke="#7cacf8" stroke-width="1.7"/></svg>
</aside>
</div>
<div class="abs" style="left:2301.4px;top:0;width:4px;height:944px;background:#161616"></div>
</body></html>
